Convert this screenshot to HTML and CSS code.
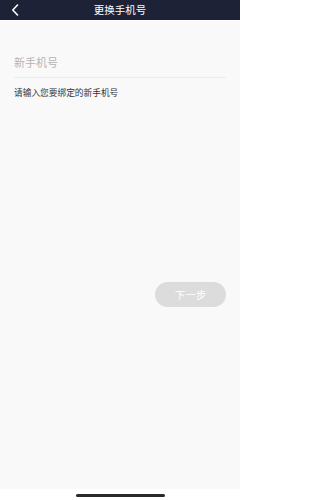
FILE: index.html
```html
<!DOCTYPE html>
<html lang="zh">
<head>
<meta charset="utf-8">
<link rel="stylesheet" href="styles.css">
</head>
<body>
<div class="app">
  <header class="nav">
    <span class="back">
      <svg width="8" height="12" viewBox="0 0 8 12"><path d="M6.5 1 L1.8 6 L6.5 11" fill="none" stroke="#fff" stroke-width="1.6" stroke-linecap="round" stroke-linejoin="round"/></svg>
    </span>
    <span class="title">更换手机号</span>
  </header>
  <main class="content">
    <div class="field"><span class="placeholder">新手机号</span></div>
    <p class="hint">请输入您要绑定的新手机号</p>
    <div class="actions"><button class="next">下一步</button></div>
  </main>
  <footer class="home"><span class="bar"></span></footer>
</div>
</body>
</html>
```
FILE: styles.css
```css
html, body { margin: 0; padding: 0; }
body { font-family: "Noto Sans CJK SC", "Noto Sans", sans-serif; background: #fff; }
.app { width: 240px; height: 500px; display: flex; flex-direction: column; }
.nav { height: 20px; background: #1e2236; border-bottom: 1px solid #fff; position: relative; display: flex; align-items: center; justify-content: center; }
.back { position: absolute; left: 11px; top: 4px; display: flex; }
.title { color: #fff; font-size: 10.5px; line-height: 20px; }
.content { height: 468px; background: #f9f9f9; display: flex; flex-direction: column; }
.field { margin: 0 14px; padding-top: 31px; padding-bottom: 7px; border-bottom: 1px solid #ececec; line-height: 16px; }
.placeholder { font-size: 11px; color: #b4b4b4; }
.hint { margin: 9px 14px 0; font-size: 8.7px; line-height: 12px; color: #333; }
.actions { display: flex; justify-content: flex-end; margin: 183px 14px 0; }
.next { width: 71px; height: 25px; border: none; border-radius: 13px; background: #dcdcdc; color: #fff; font-family: inherit; font-size: 10.5px; padding: 0; }
.home { flex: 1; background: #fff; display: flex; justify-content: center; padding-top: 5px; box-sizing: border-box; }
.bar { width: 89px; height: 2.5px; background: #2a2a2a; border-radius: 2px; }
```
